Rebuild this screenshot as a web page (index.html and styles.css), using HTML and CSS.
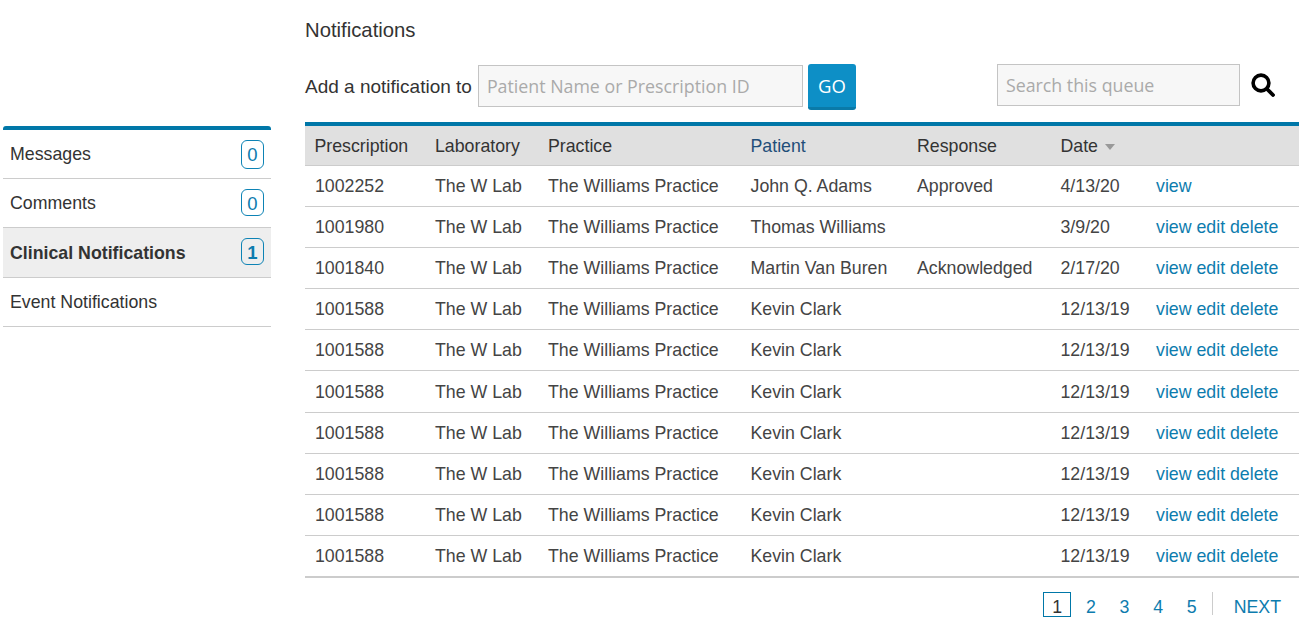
FILE: index.html
```html
<!DOCTYPE html>
<html lang="en">
<head>
<meta charset="utf-8">
<title>Notifications</title>
<link rel="stylesheet" href="styles.css">
</head>
<body>
<div class="page">
  <nav class="side">
    <a class="side-item"><span>Messages</span><span class="badge tall">0</span></a>
    <a class="side-item"><span>Comments</span><span class="badge">0</span></a>
    <a class="side-item active"><span class="side-name">Clinical Notifications</span><span class="badge">1</span></a>
    <a class="side-item"><span>Event Notifications</span></a>
  </nav>
  <main class="main">
    <h1 class="title">Notifications</h1>
    <div class="toolbar">
      <label class="add-label">Add a notification to</label>
      <input class="field field-add" placeholder="Patient Name or Prescription ID">
      <button class="go">GO</button>
      <input class="field field-search" placeholder="Search this queue">
      <svg class="search-icon" viewBox="0 0 24 24" width="24" height="24"><circle cx="10" cy="10" r="7.9" fill="none" stroke="#000" stroke-width="3.6"/><path d="M16 16 L22 22" stroke="#000" stroke-width="3.8" stroke-linecap="round"/></svg>
    </div>
    <table class="grid">
      <colgroup><col class="c1"><col class="c2"><col class="c3"><col class="c4"><col class="c5"><col class="c6"><col class="c7"></colgroup>
      <thead>
        <tr><th>Prescription</th><th>Laboratory</th><th>Practice</th><th class="sorted">Patient</th><th>Response</th><th>Date <span class="caret"></span></th><th></th></tr>
      </thead>
      <tbody>
        <tr><td>1002252</td><td>The W Lab</td><td>The Williams Practice</td><td>John Q. Adams</td><td>Approved</td><td>4/13/20</td><td><a>view</a></td></tr>
        <tr><td>1001980</td><td>The W Lab</td><td>The Williams Practice</td><td>Thomas Williams</td><td></td><td>3/9/20</td><td><a>view edit delete</a></td></tr>
        <tr><td>1001840</td><td>The W Lab</td><td>The Williams Practice</td><td>Martin Van Buren</td><td>Acknowledged</td><td>2/17/20</td><td><a>view edit delete</a></td></tr>
        <tr><td>1001588</td><td>The W Lab</td><td>The Williams Practice</td><td>Kevin Clark</td><td></td><td>12/13/19</td><td><a>view edit delete</a></td></tr>
        <tr><td>1001588</td><td>The W Lab</td><td>The Williams Practice</td><td>Kevin Clark</td><td></td><td>12/13/19</td><td><a>view edit delete</a></td></tr>
        <tr class="row-tall"><td>1001588</td><td>The W Lab</td><td>The Williams Practice</td><td>Kevin Clark</td><td></td><td>12/13/19</td><td><a>view edit delete</a></td></tr>
        <tr><td>1001588</td><td>The W Lab</td><td>The Williams Practice</td><td>Kevin Clark</td><td></td><td>12/13/19</td><td><a>view edit delete</a></td></tr>
        <tr><td>1001588</td><td>The W Lab</td><td>The Williams Practice</td><td>Kevin Clark</td><td></td><td>12/13/19</td><td><a>view edit delete</a></td></tr>
        <tr><td>1001588</td><td>The W Lab</td><td>The Williams Practice</td><td>Kevin Clark</td><td></td><td>12/13/19</td><td><a>view edit delete</a></td></tr>
        <tr><td>1001588</td><td>The W Lab</td><td>The Williams Practice</td><td>Kevin Clark</td><td></td><td>12/13/19</td><td><a>view edit delete</a></td></tr>
      </tbody>
    </table>
    <div class="pager">
      <a class="page-num current">1</a>
      <a class="page-num">2</a>
      <a class="page-num">3</a>
      <a class="page-num">4</a>
      <a class="page-num">5</a>
      <span class="pager-sep"></span>
      <a class="next">NEXT</a>
    </div>
  </main>
</div>
</body>
</html>
```
FILE: styles.css
```css
html, body { margin: 0; padding: 0; background: #fff; overflow: hidden; }
body { font-family: "Liberation Sans", Arial, sans-serif; font-size: 17.75px; color: #333; }
.page { display: flex; height: 626px; padding-left: 3px; box-sizing: border-box; }
.side { width: 268px; margin-top: 126px; border-top: 4px solid #0077a8; border-radius: 3px 3px 0 0; flex: none; align-self: flex-start; }
.side-item { display: flex; align-items: center; justify-content: space-between; height: 48px; padding: 0 7px; border-bottom: 1px solid #ccc; color: #333; }
.side-item:nth-child(3) { height: 49px; }
.side-item.active { background: #eee; font-weight: bold; }
.side-name { padding-top: 2px; }
.badge { width: 23px; height: 27px; margin-bottom: 2px; box-sizing: border-box; border: 1px solid #0d83b5; border-radius: 6px; color: #0d7cae; font-size: 18.5px; line-height: 27px; text-align: center; background: #fff; }
.badge.tall { height: 29px; margin-bottom: 0; line-height: 28px; }
.active .badge { background: #eee; }
.main { margin-left: 34px; width: 994px; flex: none; }
.title { margin: 18px 0 0; font-size: 20.3px; font-weight: normal; line-height: 24px; color: #333; }
.toolbar { display: flex; align-items: flex-start; margin-top: 22px; height: 46px; }
.add-label { font-size: 19px; color: #333; margin-right: 6px; line-height: 46px; }
.field { box-sizing: border-box; height: 42px; border: 1px solid #c4c4c4; background: #f7f7f7; padding: 0 8px; font-family: "Open Sans", sans-serif; font-size: 17.8px; color: #333; outline: none; border-radius: 0; }
.field::placeholder { color: #aaa; opacity: 1; }
.field-add { width: 325px; margin-top: 1px; }
.go { margin-left: 5px; width: 48px; height: 46px; box-sizing: border-box; border: 0; border-bottom: 3px solid #0a7aa8; border-radius: 3px; background: #0d8fc6; color: #fff; font-family: "Open Sans", sans-serif; font-size: 18.5px; padding: 0; }
.field-search { margin-left: 141px; width: 243px; }
.search-icon { margin-left: 11px; margin-top: 9px; flex: none; }
.grid { margin-top: 12px; width: 994px; border-collapse: collapse; table-layout: fixed; border-top: 4px solid #0077a8; }
.c1 { width: 120px; } .c2 { width: 113px; } .c3 { width: 202.5px; } .c4 { width: 166.5px; } .c5 { width: 143.5px; } .c6 { width: 95.5px; } .c7 { width: 153px; }
th, td { padding: 0 0 0 10px; text-align: left; font-weight: normal; white-space: nowrap; color: #444; }
th { height: 37px; padding-top: 2px; background: #e0e0e0; border-bottom: 1px solid #ccc; color: #333; }
th:first-child { padding-left: 9.5px; }
th.sorted { color: #1f4e79; }
td { height: 40px; border-bottom: 1px solid #ccc; }
.row-tall td { padding-top: 1px; }
tbody tr:last-child td { border-bottom: 2px solid #ccc; }
td a { color: #0d7cae; }
.caret { display: inline-block; width: 0; height: 0; margin-left: 2px; vertical-align: 2px; border-left: 5px solid transparent; border-right: 5px solid transparent; border-top: 6px solid #999; }
.pager { display: flex; align-items: flex-start; justify-content: flex-end; margin-top: 14px; padding-right: 17px; color: #0d7cae; }
.page-num { box-sizing: border-box; width: 28px; height: 25px; text-align: center; margin-left: 5.6px; line-height: 29px; border: 1px solid transparent; color: #0d7cae; }
.page-num.current { border-color: #0077a8; color: #333; margin-left: 0; }
.pager-sep { width: 1px; height: 23px; background: #ccc; margin-left: 6px; margin-right: 21px; }
.next { color: #0d7cae; line-height: 30px; margin-right: 1px; }
```
